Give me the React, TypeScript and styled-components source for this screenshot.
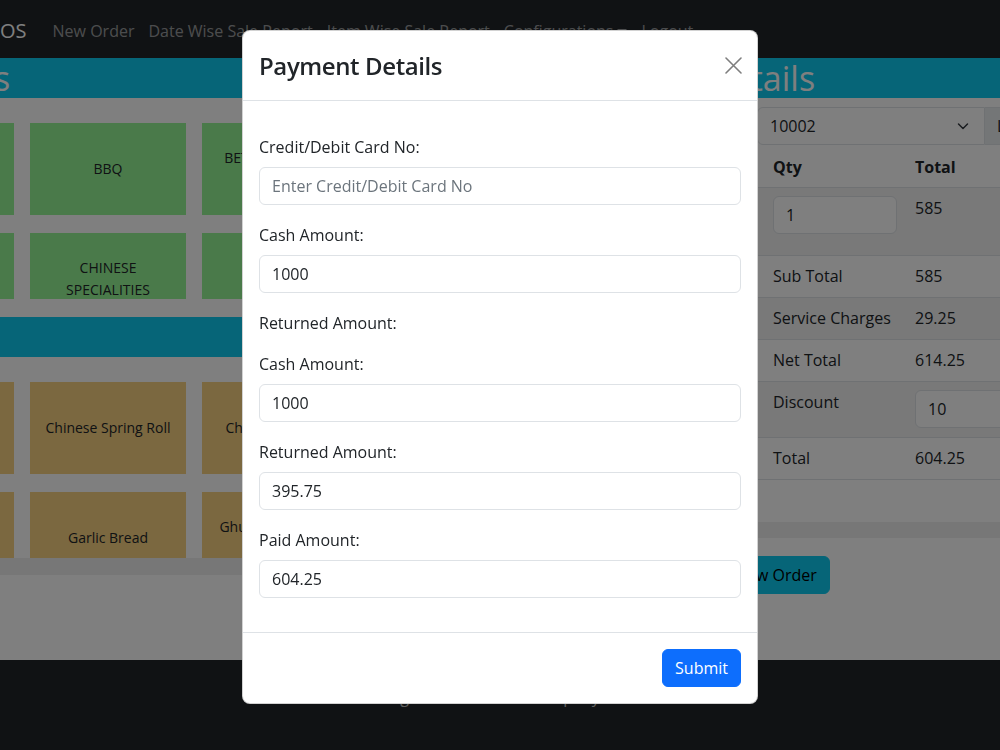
import React from 'react';
import styled, { createGlobalStyle } from 'styled-components';

const GlobalStyle = createGlobalStyle`
  html, body {
    margin: 0;
    padding: 0;
    overflow: hidden;
    background: #ffffff;
    font-family: "Open Sans", "Liberation Sans", sans-serif;
    color: #212529;
    font-size: 16px;
    line-height: 1.5;
  }
  * { box-sizing: border-box; }
`;

const Viewport = styled.div`
  width: 100%;
  height: 750px;
  overflow: hidden;
`;

// the page is wider than the window and scrolled sideways
const Page = styled.div`
  width: 1320px;
  margin-left: -158px;
  display: flex;
  flex-direction: column;
  min-height: 750px;
`;

const Navbar = styled.nav`
  height: 58px;
  background: #212529;
  display: flex;
  align-items: center;
  padding-top: 3px;
  padding-left: 146px;
`;

const Brand = styled.span`
  font-size: 20px;
  color: #ffffff;
  margin-right: 19px;
`;

const NavLink = styled.span<{ $dropdown?: boolean }>`
  color: rgba(255, 255, 255, 0.55);
  padding: 8px 7px;
  white-space: nowrap;

  &::after {
    content: '';
    display: ${({ $dropdown }) => ($dropdown ? 'inline-block' : 'none')};
    margin-left: 4px;
    vertical-align: 3px;
    border-top: 5px solid;
    border-right: 5px solid transparent;
    border-left: 5px solid transparent;
  }
`;

const Main = styled.div`
  flex: 1;
  display: grid;
  grid-template-columns: 758px 1fr;
  background: #ffffff;
`;

const Column = styled.div`
  display: flex;
  flex-direction: column;
  min-width: 0;
`;

const SectionHeader = styled.h2<{ $indent?: number }>`
  margin: 0;
  height: 40px;
  padding-left: ${({ $indent }) => $indent ?? 0}px;
  background: #0dcaf0;
  color: #ffffff;
  font-size: 34px;
  font-weight: 500;
  line-height: 40px;
  white-space: nowrap;
  overflow: hidden;
`;

const TileArea = styled.div`
  height: 201px;
  overflow: hidden;
  padding: 25px 16px 0;
  display: grid;
  grid-template-columns: repeat(4, 156px);
  grid-auto-rows: 92px;
  gap: 18px 16px;
`;

const Tile = styled.div<{ $kind: 'category' | 'item' }>`
  background: ${({ $kind }) => ($kind === 'category' ? '#94f494' : '#f6d080')};
  display: flex;
  align-items: center;
  justify-content: center;
  text-align: center;
  padding: 0 8px;
  font-size: 14px;
  line-height: 22px;
  color: #212529;
`;

const Spacer = styled.div<{ $h: number }>`
  height: ${({ $h }) => $h}px;
`;

const ScrollTrack = styled.div<{ $h: number }>`
  height: ${({ $h }) => $h}px;
  background: #eeeeee;
`;

const SelectRow = styled.div`
  display: flex;
  align-items: center;
  margin-top: 9px;
  height: 38px;
`;

const RowLabel = styled.span`
  width: 157px;
  padding-left: 8px;
`;

const Select = styled.div`
  width: 228px;
  height: 38px;
  border: 1px solid #dee2e6;
  border-radius: 6px 0 0 6px;
  padding: 6px 15px 6px 12px;
  display: flex;
  align-items: center;
  justify-content: space-between;
  background: #ffffff;
`;

const AddonButton = styled.span`
  height: 38px;
  padding: 6px 12px;
  background: #e9ecef;
  border: 1px solid #dee2e6;
  border-left: 0;
  border-radius: 0 6px 6px 0;
`;

const Table = styled.table`
  width: 100%;
  border-collapse: collapse;
  vertical-align: top;
`;

const Th = styled.th<{ $w?: number }>`
  text-align: left;
  font-weight: 700;
  padding: 9px 8px 7px;
  height: 42px;
  width: ${({ $w }) => ($w ? `${$w}px` : 'auto')};
  border-bottom: 1px solid #dee2e6;
`;

const Tr = styled.tr<{ $striped?: boolean; $h: number }>`
  height: ${({ $h }) => $h}px;
  background: ${({ $striped }) => ($striped ? '#f2f2f2' : 'transparent')};
  border-bottom: 1px solid #dee2e6;
`;

const Td = styled.td`
  padding: 8px;
  vertical-align: top;
`;

const Input = styled.input<{ $w?: number }>`
  display: block;
  width: ${({ $w }) => ($w ? `${$w}px` : '100%')};
  height: 38px;
  padding: 6px 12px;
  font-family: inherit;
  font-size: 16px;
  color: #212529;
  background: #ffffff;
  border: 1px solid #dee2e6;
  border-radius: 6px;
  outline: none;

  &::placeholder {
    color: #6c757d;
  }
`;

const ButtonRow = styled.div`
  display: flex;
  margin-top: 18px;
  padding-left: 122px;
`;

const Button = styled.button<{ $variant: 'info' | 'primary' }>`
  font-family: inherit;
  font-size: 16px;
  line-height: 24px;
  padding: 6px 12px;
  border-radius: 6px;
  border: 1px solid ${({ $variant }) => ($variant === 'info' ? '#0dcaf0' : '#0d6efd')};
  background: ${({ $variant }) => ($variant === 'info' ? '#0dcaf0' : '#0d6efd')};
  color: ${({ $variant }) => ($variant === 'info' ? '#000000' : '#ffffff')};
  cursor: pointer;
`;

const Footer = styled.footer`
  height: 90px;
  background: #212529;
  color: rgba(255, 255, 255, 0.7);
  padding-top: 25px;
  padding-left: 158px;
  width: 1158px;
  text-align: center;
`;

const Backdrop = styled.div`
  position: fixed;
  inset: 0;
  background: rgba(0, 0, 0, 0.5);
`;

const ModalLayer = styled.div`
  position: fixed;
  inset: 0;
`;

const Dialog = styled.div`
  width: 516px;
  margin: 30px auto;
  background: #ffffff;
  border: 1px solid rgba(0, 0, 0, 0.175);
  border-radius: 8px;
`;

const ModalHeader = styled.div`
  display: flex;
  align-items: center;
  justify-content: space-between;
  padding: 16px;
  border-bottom: 1px solid #dee2e6;
`;

const ModalTitle = styled.h5`
  margin: 0;
  font-size: 24px;
  font-weight: 600;
  letter-spacing: -0.4px;
  line-height: 37px;
`;

const CloseButton = styled.button`
  width: 24px;
  height: 24px;
  margin-right: -4px;
  padding: 0;
  border: 0;
  background: transparent;
  display: flex;
  align-items: center;
  justify-content: center;
  opacity: 0.5;
`;

const ModalBody = styled.div`
  padding: 34px 16px 16px;
`;

const FormGroup = styled.div<{ $gap?: number }>`
  margin-bottom: ${({ $gap }) => $gap ?? 18}px;
`;

const Label = styled.label<{ $alone?: boolean }>`
  display: block;
  margin-bottom: ${({ $alone }) => ($alone ? 0 : 8)}px;
`;

const ModalFooter = styled.div`
  display: flex;
  justify-content: flex-end;
  padding: 12px;
  border-top: 1px solid #dee2e6;

  & > * {
    margin: 4px;
  }
`;

const categories = [
  'CHICKEN', 'BBQ', 'BETWEEN MEALS SNACKS', 'BEVERAGES',
  'BURGERS', 'CHINESE SPECIALITIES', 'DESSERTS', 'FISH & SEAFOOD',
];

const items = [
  'Chicken Tikka', 'Chinese Spring Roll', 'Chicken Nuggets', 'Club Sandwich',
  'French Fries', 'Garlic Bread', 'Ghungroo Chicken Roll', 'Hot Wings',
];

const summary = [
  { label: 'Sub Total', value: '585' },
  { label: 'Service Charges', value: '29.25' },
  { label: 'Net Total', value: '614.25' },
];

const App: React.FC = () => {
  return (
    <>
      <GlobalStyle />
      <Viewport>
        <Page>
          <Navbar>
            <Brand>POS</Brand>
            <NavLink>New Order</NavLink>
            <NavLink>Date Wise Sale Report</NavLink>
            <NavLink>Item Wise Sale Report</NavLink>
            <NavLink $dropdown>Configurations</NavLink>
            <NavLink>Logout</NavLink>
          </Navbar>

          <Main>
            <Column>
              <SectionHeader>Categories</SectionHeader>
              <TileArea>
                {categories.map((c) => (
                  <Tile key={c} $kind="category">{c}</Tile>
                ))}
              </TileArea>
              <Spacer $h={18} />
              <SectionHeader>Items</SectionHeader>
              <TileArea>
                {items.map((i) => (
                  <Tile key={i} $kind="item">{i}</Tile>
                ))}
              </TileArea>
              <ScrollTrack $h={17} />
            </Column>

            <Column>
              <SectionHeader $indent={4}>Order Details</SectionHeader>
              <SelectRow>
                <RowLabel>Table No:</RowLabel>
                <Select>
                  <span>10002</span>
                  <svg width="12" height="12" viewBox="0 0 12 12">
                    <path d="M1.5 4l4.5 4.5L10.5 4" fill="none" stroke="#343a40" strokeWidth="1.5" strokeLinecap="round" strokeLinejoin="round" />
                  </svg>
                </Select>
                <AddonButton>Load</AddonButton>
              </SelectRow>
              <Table>
                <thead>
                  <tr>
                    <Th $w={165}>Item</Th>
                    <Th $w={142}>Qty</Th>
                    <Th>Total</Th>
                  </tr>
                </thead>
                <tbody>
                  <Tr $striped $h={68}>
                    <Td>Chinese Spring Roll</Td>
                    <Td><Input $w={124} defaultValue="1" /></Td>
                    <Td>585</Td>
                  </Tr>
                  {summary.map((s, idx) => (
                    <Tr key={s.label} $striped={idx % 2 === 1} $h={42}>
                      <Td />
                      <Td>{s.label}</Td>
                      <Td>{s.value}</Td>
                    </Tr>
                  ))}
                  <Tr $striped $h={56}>
                    <Td />
                    <Td>Discount</Td>
                    <Td><Input $w={200} defaultValue="10" /></Td>
                  </Tr>
                  <Tr $h={42}>
                    <Td />
                    <Td>Total</Td>
                    <Td>604.25</Td>
                  </Tr>
                </tbody>
              </Table>
              <Spacer $h={42} />
              <ScrollTrack $h={16} />
              <ButtonRow>
                <Button $variant="info">New Order</Button>
              </ButtonRow>
            </Column>
          </Main>

          <Footer>Designed at Blue Sea Company Ltd.</Footer>
        </Page>
      </Viewport>

      <Backdrop />
      <ModalLayer>
        <Dialog>
          <ModalHeader>
            <ModalTitle>Payment Details</ModalTitle>
            <CloseButton aria-label="Close">
              <svg width="17" height="17" viewBox="0 0 17 17">
                <path d="M1 1l15 15M16 1L1 16" stroke="#000" strokeWidth="1.6" strokeLinecap="round" />
              </svg>
            </CloseButton>
          </ModalHeader>
          <ModalBody>
            <FormGroup>
              <Label>Credit/Debit Card No:</Label>
              <Input placeholder="Enter Credit/Debit Card No" />
            </FormGroup>
            <FormGroup>
              <Label>Cash Amount:</Label>
              <Input defaultValue="1000" />
            </FormGroup>
            <FormGroup $gap={17}>
              <Label $alone>Returned Amount:</Label>
            </FormGroup>
            <FormGroup>
              <Label>Cash Amount:</Label>
              <Input defaultValue="1000" />
            </FormGroup>
            <FormGroup>
              <Label>Returned Amount:</Label>
              <Input defaultValue="395.75" />
            </FormGroup>
            <FormGroup>
              <Label>Paid Amount:</Label>
              <Input defaultValue="604.25" />
            </FormGroup>
          </ModalBody>
          <ModalFooter>
            <Button $variant="primary">Submit</Button>
          </ModalFooter>
        </Dialog>
      </ModalLayer>
    </>
  );
};

export default App;
